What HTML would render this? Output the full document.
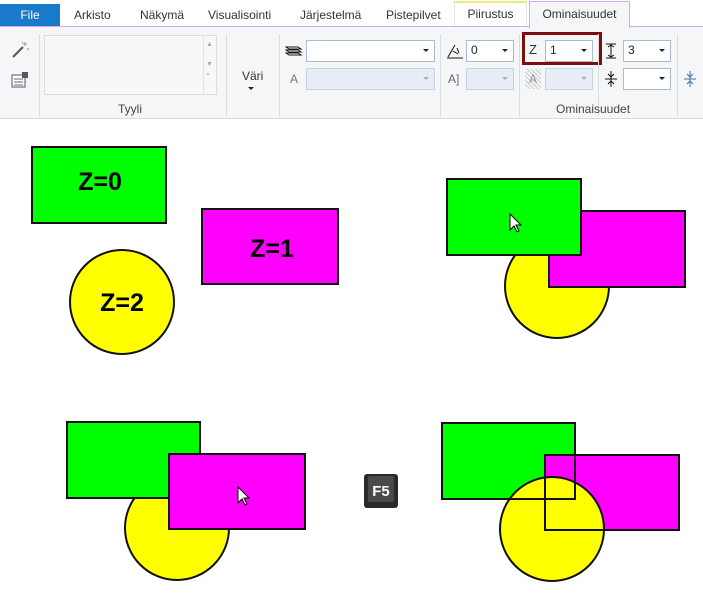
<!DOCTYPE html>
<html><head><meta charset="utf-8"><style>
*{margin:0;padding:0;box-sizing:border-box}
body{width:703px;height:603px;overflow:hidden;background:#fff;font-family:"Segoe UI","Liberation Sans","DejaVu Sans",sans-serif;font-size:12px;color:#333;position:relative}
.a{position:absolute}
.tab{position:absolute;top:4px;height:23px;line-height:23px;font-size:12px;color:#333}
.cb{position:absolute;height:22px;border:1px solid #abbbd0;background:#fff}
.cb.d{background:#e6edf6;border-color:#c8d3e2}
.cb:after{content:"";position:absolute;right:5px;top:8px;border-left:3px solid transparent;border-right:3px solid transparent;border-top:3px solid #222}
.cb.d:after{border-top-color:#b0b0b0}
.cb span{position:absolute;left:4px;top:2px;font-size:12px;color:#222}
.sep{position:absolute;top:34px;width:1px;height:82px;background:#dcdcdc}
</style></head><body>
<div class="a" style="left:0;top:0;width:703px;height:27px;background:#fff"></div>
<div class="a" style="left:0;top:4px;width:60px;height:23px;background:#1979ca;color:#fff;text-align:center;line-height:23px">File</div>
<div class="tab" style="left:74px">Arkisto</div>
<div class="tab" style="left:140px">Näkymä</div>
<div class="tab" style="left:208px">Visualisointi</div>
<div class="tab" style="left:300px">Järjestelmä</div>
<div class="tab" style="left:386px">Pistepilvet</div>
<div class="a" style="left:454px;top:1px;width:73px;height:26px;border:1px solid #e6e6e6;border-top:2px solid #ecec7a;background:#fff;text-align:center;line-height:22px">Piirustus</div>
<div class="a" style="left:529px;top:1px;width:101px;height:27px;border:1px solid #dba7ec;border-bottom:none;background:#f5f6f7;text-align:center;line-height:24px;z-index:2">Ominaisuudet</div>
<div class="a" style="left:0;top:26px;width:703px;height:1px;background:#dba7ec"></div>
<div class="a" style="left:0;top:27px;width:703px;height:92px;background:#f5f6f7;border-bottom:1px solid #dadbdc"></div>
<!-- left icons -->
<svg class="a" style="left:10px;top:40px" width="20" height="20"><line x1="3" y1="17" x2="13" y2="7" stroke="#555" stroke-width="2"/><path d="M15 2v4M13 4h4M17 8l2 2M12 2l1 1" stroke="#999" stroke-width="1"/></svg>
<svg class="a" style="left:11px;top:71px" width="20" height="18"><rect x="1" y="4" width="13" height="12" fill="#fff" stroke="#556"/><path d="M3 8h9M3 11h9M3 14h9" stroke="#667"/><rect x="11" y="1" width="6" height="6" fill="#556"/></svg>
<div class="sep" style="left:39px"></div>
<div class="a" style="left:44px;top:35px;width:173px;height:60px;border:1px solid #dcdcdc;background:#f7f8f9"></div>
<div class="a" style="left:203px;top:36px;width:1px;height:58px;background:#e3e3e3"></div>
<div class="a" style="left:206px;top:40px;font-size:7px;color:#aaa;line-height:10px">▲<br><br>▼<br>⩡</div>
<div class="a" style="left:118px;top:102px;font-size:12px;color:#444">Tyyli</div>
<div class="sep" style="left:226px"></div>
<div class="a" style="left:242px;top:69px;color:#333">Väri</div>
<div class="a" style="left:248px;top:87px;border-left:3px solid transparent;border-right:3px solid transparent;border-top:3px solid #222"></div>
<div class="sep" style="left:279px"></div>
<svg class="a" style="left:285px;top:43px" width="18" height="16"><path d="M1 4h12l3 2H4zM1 7h12l3 2H4zM1 10h12l3 2H4z" fill="#fff" stroke="#111"/></svg>
<div class="cb" style="left:306px;top:40px;width:129px"></div>
<div class="a" style="left:290px;top:72px;color:#777">A</div>
<div class="cb d" style="left:306px;top:68px;width:129px"></div>
<div class="sep" style="left:440px"></div>
<svg class="a" style="left:446px;top:42px" width="18" height="18"><path d="M1 16h16M2 15L9 3M7 9l5 3M11 6l2 5" stroke="#111" fill="none"/></svg>
<div class="cb" style="left:466px;top:40px;width:48px"><span>0</span></div>
<div class="a" style="left:448px;top:72px;color:#667;font-size:12px">A]</div>
<div class="cb d" style="left:466px;top:68px;width:48px"></div>
<div class="sep" style="left:519px"></div>
<div class="a" style="left:522px;top:32px;width:80px;height:33px;border:3px solid #7b0e0e"></div>
<div class="a" style="left:529px;top:42px;color:#333;font-size:13px">Z</div>
<div class="cb" style="left:545px;top:40px;width:48px"><span>1</span></div>
<div class="a" style="left:525px;top:69px;width:16px;height:20px;background:repeating-linear-gradient(45deg,#ccc 0 1px,#f5f6f7 1px 3px);color:#999;text-align:center;line-height:20px">A</div>
<div class="cb d" style="left:545px;top:68px;width:48px"></div>
<div class="sep" style="left:598px"></div>
<svg class="a" style="left:604px;top:42px" width="14" height="18"><path d="M2 2h10M2 16h10M7 3v12M4 5l3-2 3 2M4 13l3 2 3-2" stroke="#111" fill="none"/></svg>
<div class="cb" style="left:623px;top:40px;width:48px"><span>3</span></div>
<svg class="a" style="left:604px;top:70px" width="14" height="18"><path d="M1 9h12M7 1v16M4 4l3 3 3-3M4 14l3-3 3 3" stroke="#111" fill="none"/></svg>
<div class="cb" style="left:623px;top:68px;width:48px"></div>
<div class="sep" style="left:677px"></div>
<svg class="a" style="left:683px;top:70px" width="14" height="18"><path d="M1 9h12M7 1v16M4 4l3 3 3-3M4 14l3-3 3 3" stroke="#3a6fb0" fill="none"/></svg>
<div class="a" style="left:556px;top:102px;color:#444">Ominaisuudet</div>

<svg class="a" style="left:0;top:0" width="703" height="603">
<g stroke="#111" stroke-width="2" font-family="Liberation Sans,Arial,sans-serif" font-weight="bold" font-size="25">
<rect x="32" y="147" width="134" height="76" fill="#00ff00"/>
<rect x="202" y="209" width="136" height="75" fill="#ff00ff"/>
<circle cx="122" cy="302" r="52" fill="#ffff00"/>
<g stroke="none" fill="#000" text-anchor="middle"><text x="100" y="190">Z=0</text><text x="272" y="257">Z=1</text><text x="122" y="311">Z=2</text></g>

<circle cx="557" cy="286" r="52" fill="#ffff00"/>
<rect x="549" y="211" width="136" height="76" fill="#ff00ff"/>
<rect x="447" y="179" width="134" height="76" fill="#00ff00"/>

<circle cx="177" cy="528" r="52" fill="#ffff00"/>
<rect x="67" y="422" width="133" height="76" fill="#00ff00"/>
<rect x="169" y="454" width="136" height="75" fill="#ff00ff"/>

<rect x="442" y="423" width="133" height="76" fill="#00ff00"/>
<rect x="545" y="455" width="134" height="75" fill="#ff00ff"/>
<circle cx="552" cy="529" r="52" fill="#ffff00"/>
<g fill="none"><rect x="442" y="423" width="133" height="76"/><rect x="545" y="455" width="134" height="75"/></g>
</g>
<path d="M510 214v16l4-4 3 6 2-1-3-6h5z" fill="#fff" stroke="#000" stroke-width="1"/>
<path d="M238 487v16l4-4 3 6 2-1-3-6h5z" fill="#fff" stroke="#000" stroke-width="1"/>
<rect x="364" y="474" width="34" height="34" rx="3" fill="#2a2a2a"/>
<rect x="368" y="476" width="26" height="26" rx="2" fill="#4a4a4a"/>
<text x="381" y="496" text-anchor="middle" fill="#fff" font-family="Liberation Sans,Arial,sans-serif" font-weight="bold" font-size="15">F5</text>
</svg>
</body></html>
